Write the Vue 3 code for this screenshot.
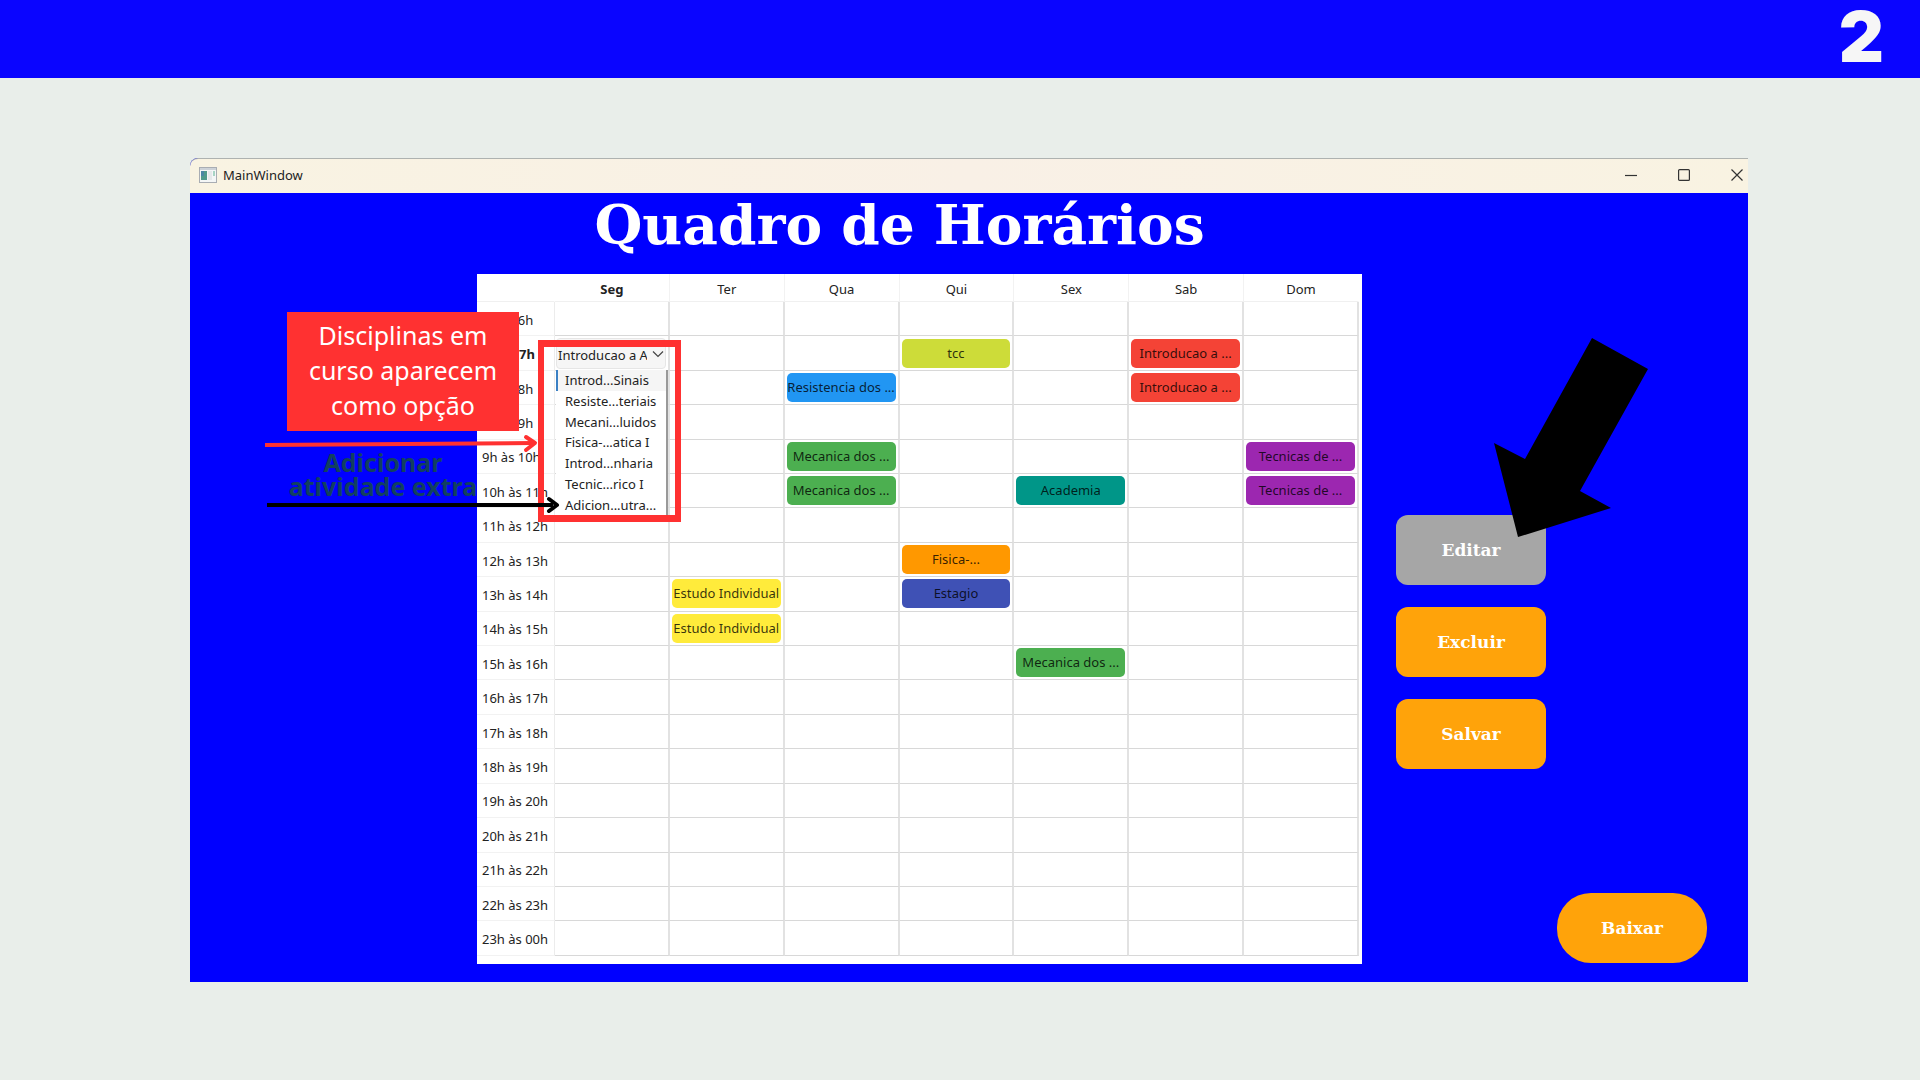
<script setup>
import { ref } from 'vue'

const days = ['Seg', 'Ter', 'Qua', 'Qui', 'Sex', 'Sab', 'Dom']
const hour = (h) => (h === 24 ? '00h' : `${h}h`)
const rows = Array.from({ length: 19 }, (_, i) => ({
  start: i + 5,
  label: `${hour(i + 5)} às ${hour(i + 6)}`,
}))

const activities = {
  'Qui-6': { text: 'tcc', tone: 'lime' },
  'Sab-6': { text: 'Introducao a ...', tone: 'red' },
  'Sab-7': { text: 'Introducao a ...', tone: 'red' },
  'Qua-7': { text: 'Resistencia dos ...', tone: 'blue' },
  'Qua-9': { text: 'Mecanica dos ...', tone: 'green' },
  'Qua-10': { text: 'Mecanica dos ...', tone: 'green' },
  'Dom-9': { text: 'Tecnicas de ...', tone: 'purple' },
  'Dom-10': { text: 'Tecnicas de ...', tone: 'purple' },
  'Sex-10': { text: 'Academia', tone: 'teal' },
  'Qui-12': { text: 'Fisica-...', tone: 'orange' },
  'Qui-13': { text: 'Estagio', tone: 'indigo' },
  'Ter-13': { text: 'Estudo Individual', tone: 'yellow' },
  'Ter-14': { text: 'Estudo Individual', tone: 'yellow' },
  'Sex-15': { text: 'Mecanica dos ...', tone: 'green' },
}

const options = [
  'Introd...Sinais',
  'Resiste...teriais',
  'Mecani...luidos',
  'Fisica-...atica I',
  'Introd...nharia',
  'Tecnic...rico I',
  'Adicion...utra...',
]
const selected = ref('Introducao a A')
const highlighted = ref(0)
</script>

<template>
  <div class="slide">
    <header class="banner"><span class="number">2</span></header>

    <main class="window">
      <div class="titlebar">
        <svg class="app-icon" width="18" height="16" viewBox="0 0 18 16" aria-hidden="true">
          <rect x="0.5" y="0.5" width="17" height="15" fill="#f4f6f6" stroke="#a9adb3" />
          <rect x="1" y="1" width="16" height="2" fill="#cdd2d8" />
          <rect x="2" y="4" width="6" height="9" fill="#4f9a8c" />
          <rect x="2" y="4" width="3" height="5" fill="#4a86a4" />
          <rect x="9" y="4" width="4" height="9" fill="#e6e8ea" />
          <rect x="14" y="4" width="2" height="5" fill="#a8d4c4" />
        </svg>
        <span class="caption">MainWindow</span>
        <div class="controls">
          <button type="button" aria-label="Minimizar">
            <svg width="12" height="12" viewBox="0 0 12 12"><path d="M0 6.5H12" /></svg>
          </button>
          <button type="button" aria-label="Maximizar">
            <svg width="12" height="12" viewBox="0 0 12 12"><rect x="0.6" y="0.6" width="10.8" height="10.8" rx="1" /></svg>
          </button>
          <button type="button" aria-label="Fechar">
            <svg width="12" height="12" viewBox="0 0 12 12"><path d="M0.5 0.5L11.5 11.5M11.5 0.5L0.5 11.5" /></svg>
          </button>
        </div>
      </div>

      <div class="content">
        <h1>Quadro de Horários</h1>

        <div class="board">
          <table>
            <colgroup>
              <col class="hours" />
              <col v-for="day in days" :key="day" />
            </colgroup>
            <thead>
              <tr>
                <th></th>
                <th v-for="day in days" :key="day" scope="col" :class="{ current: day === 'Seg' }">{{ day }}</th>
              </tr>
            </thead>
            <tbody>
              <tr v-for="row in rows" :key="row.start">
                <th scope="row" :class="{ current: row.start === 6 }">{{ row.label }}</th>
                <td v-for="day in days" :key="day">
                  <div
                    v-if="activities[`${day}-${row.start}`]"
                    class="chip"
                    :class="activities[`${day}-${row.start}`].tone"
                  >{{ activities[`${day}-${row.start}`].text }}</div>
                </td>
              </tr>
            </tbody>
          </table>

          <div class="combo">
            <select v-model="selected" aria-label="Disciplina">
              <option>Introducao a A</option>
            </select>
            <svg class="chevron" width="12" height="8" viewBox="0 0 12 8" aria-hidden="true"><path d="M1 1.5L6 6.5L11 1.5" /></svg>
            <ul role="listbox" aria-label="Disciplinas">
              <li
                v-for="(option, i) in options"
                :key="option"
                role="option"
                :aria-selected="i === highlighted"
                :class="{ active: i === highlighted }"
                @mouseenter="highlighted = i"
              ><span>{{ option }}</span></li>
            </ul>
          </div>

          <div class="frame"></div>
          <p class="callout">Disciplinas em curso aparecem como opção</p>
          <p class="hint">Adicionar<br />atividade extra</p>
          <svg class="arrows" width="300" height="90" viewBox="0 0 300 90" aria-hidden="true">
            <g stroke="#ff3131">
              <path d="M2 20L271 18" stroke-width="4" />
              <path d="M263 12L272 18L263 25" stroke-width="4" stroke-linecap="round" stroke-linejoin="round" />
            </g>
            <g stroke="#000">
              <path d="M4 80H290" stroke-width="4" />
              <path d="M286 74L294 80L286 86" stroke-width="4" stroke-linecap="round" stroke-linejoin="round" />
            </g>
          </svg>
        </div>

        <aside class="actions">
          <button type="button" class="action muted">Editar</button>
          <button type="button" class="action">Excluir</button>
          <button type="button" class="action">Salvar</button>
          <button type="button" class="action download">Baixar</button>
          <svg class="pointer" width="156" height="200" viewBox="0 0 156 200" aria-hidden="true">
            <path d="M99 0L155 31L87 153L118 170L25 199L1 105L32 121Z" />
          </svg>
        </aside>
      </div>
    </main>
  </div>
</template>

<style>
body {
  margin: 0;
  background: #e9eeea;
}
</style>

<style scoped>
.slide {
  min-height: 100vh;
  font-family: "Noto Sans", "Open Sans", sans-serif;
  font-size: 13px;
  color: #222;
}
.banner {
  display: flex;
  align-items: flex-start;
  justify-content: flex-end;
  height: 78px;
  padding-right: 36px;
  background: #0a05ff;
}
.number {
  font: 900 70px/74px Inter, sans-serif;
  color: #f6f6f6;
}
.window {
  margin: 80px 172px 98px 190px;
  background: #0000ff;
  border-top-left-radius: 8px;
}
.titlebar {
  box-sizing: border-box;
  display: flex;
  align-items: center;
  height: 35px;
  padding: 0 5px 2px 9px;
  border-top: 1px solid #aeb2b0;
  border-top-left-radius: 8px;
  background: linear-gradient(90deg, #f9f3e2, #f9f0e6 50%, #f9f3e2);
}
.caption {
  margin-left: 6px;
}
.controls {
  display: flex;
  gap: 41px;
  margin-left: auto;
}
.controls button {
  display: flex;
  padding: 0;
  border: 0;
  background: none;
}
.controls svg {
  fill: none;
  stroke: #333;
  stroke-width: 1.2;
}
.content {
  display: grid;
  grid-template-columns: 287fr 885fr 386fr;
  grid-template-rows: 81px auto;
  padding-bottom: 18px;
}
h1 {
  grid-column: 2;
  margin: 0;
  padding-right: 40px;
  text-align: center;
  white-space: nowrap;
  color: #fff;
  font: bold 55px/64px "DejaVu Serif", serif;
}
.board {
  grid-column: 2;
  position: relative;
  box-sizing: border-box;
  padding: 0 3px 8px 0;
  background: #fff;
}
table {
  width: 100%;
  height: 682px;
  table-layout: fixed;
  border-collapse: separate;
  border-spacing: 0;
}
.hours {
  width: 78px;
}
th,
td {
  box-sizing: border-box;
  height: 34px;
  padding: 0;
  line-height: 18px;
}
th {
  font-weight: 400;
}
th.current {
  font-weight: 700;
}
thead th {
  height: 28px;
  padding-top: 3px;
  border-right: 1px solid #f2f2f2;
  border-bottom: 1px solid #f0f0f0;
}
thead th:first-child,
thead th:last-child {
  border-right-color: #fff;
}
tbody th {
  padding-left: 5px;
  padding-top: 2px;
  border-right: 1px solid #ececec;
  border-bottom: 1px solid #f2f2f2;
  text-align: left;
  white-space: nowrap;
}
td {
  border-right: 2px solid #e2e2e2;
  border-bottom: 1px solid #d8d8d8;
}
.chip {
  height: 29px;
  margin: 0 2px;
  border-radius: 5px;
  overflow: hidden;
  text-align: center;
  white-space: nowrap;
  line-height: 28px;
  color: rgba(0, 0, 0, 0.8);
}
.lime { background: #cddc39; }
.red { background: #f44336; }
.blue { background: #2196f3; }
.green { background: #4caf50; }
.purple { background: #9c27b0; }
.teal { background: #009688; }
.orange { background: #ff9800; }
.indigo { background: #3f51b5; }
.yellow { background: #ffeb3b; }

.combo {
  position: absolute;
  left: 79px;
  top: 64px;
  width: 112px;
}
select {
  box-sizing: border-box;
  display: block;
  width: 110px;
  height: 31px;
  padding: 2px 18px 0 1px;
  border: 1px solid #e6e6e6;
  border-radius: 4px;
  appearance: none;
  background: #f6f6f6;
  font: inherit;
  color: #222;
}
.chevron {
  position: absolute;
  right: 4px;
  top: 12px;
  fill: none;
  stroke: #444;
  stroke-width: 1.2;
}
ul {
  box-sizing: border-box;
  display: grid;
  grid-auto-rows: 1fr;
  height: 145px;
  margin: 1px 0 0;
  padding: 0;
  border-right: 2px solid #999;
  background: #fff;
  list-style: none;
}
li {
  display: flex;
  align-items: center;
  padding-left: 9px;
  white-space: nowrap;
  line-height: 18px;
}
li.active {
  border-left: 2px solid #3a80c4;
  padding-left: 7px;
  background: #f5f5f5;
}
.frame {
  position: absolute;
  left: 61px;
  top: 66px;
  box-sizing: border-box;
  width: 143px;
  height: 182px;
  border: 6px solid #ff3131;
  border-top-width: 7px;
  border-bottom-width: 7px;
}
.callout {
  position: absolute;
  left: -190px;
  top: 38px;
  box-sizing: border-box;
  width: 232px;
  height: 119px;
  margin: 0;
  padding: 6px 16px;
  background: #ff3131;
  color: #fff;
  text-align: center;
  font-size: 25px;
  line-height: 35px;
}
.hint {
  position: absolute;
  left: -194px;
  top: 176px;
  width: 200px;
  margin: 0;
  text-align: center;
  white-space: nowrap;
  color: #12405f;
  font-size: 25px;
  font-weight: 700;
  line-height: 24px;
}
.arrows {
  position: absolute;
  left: -214px;
  top: 151px;
  fill: none;
}
.actions {
  position: relative;
  display: flex;
  flex-direction: column;
  gap: 22px;
  padding: 241px 41px 1px 34px;
}
.action {
  width: 150px;
  height: 70px;
  padding: 0;
  border: 0;
  border-radius: 12px;
  background: #ffa30a;
  color: #fff;
  font: bold 17px/20px "DejaVu Serif", serif;
}
.action.muted {
  background: #a6a6a6;
}
.action.download {
  align-self: flex-end;
  margin-top: auto;
  border-radius: 34px;
}
.pointer {
  position: absolute;
  left: 131px;
  top: 64px;
}
</style>
